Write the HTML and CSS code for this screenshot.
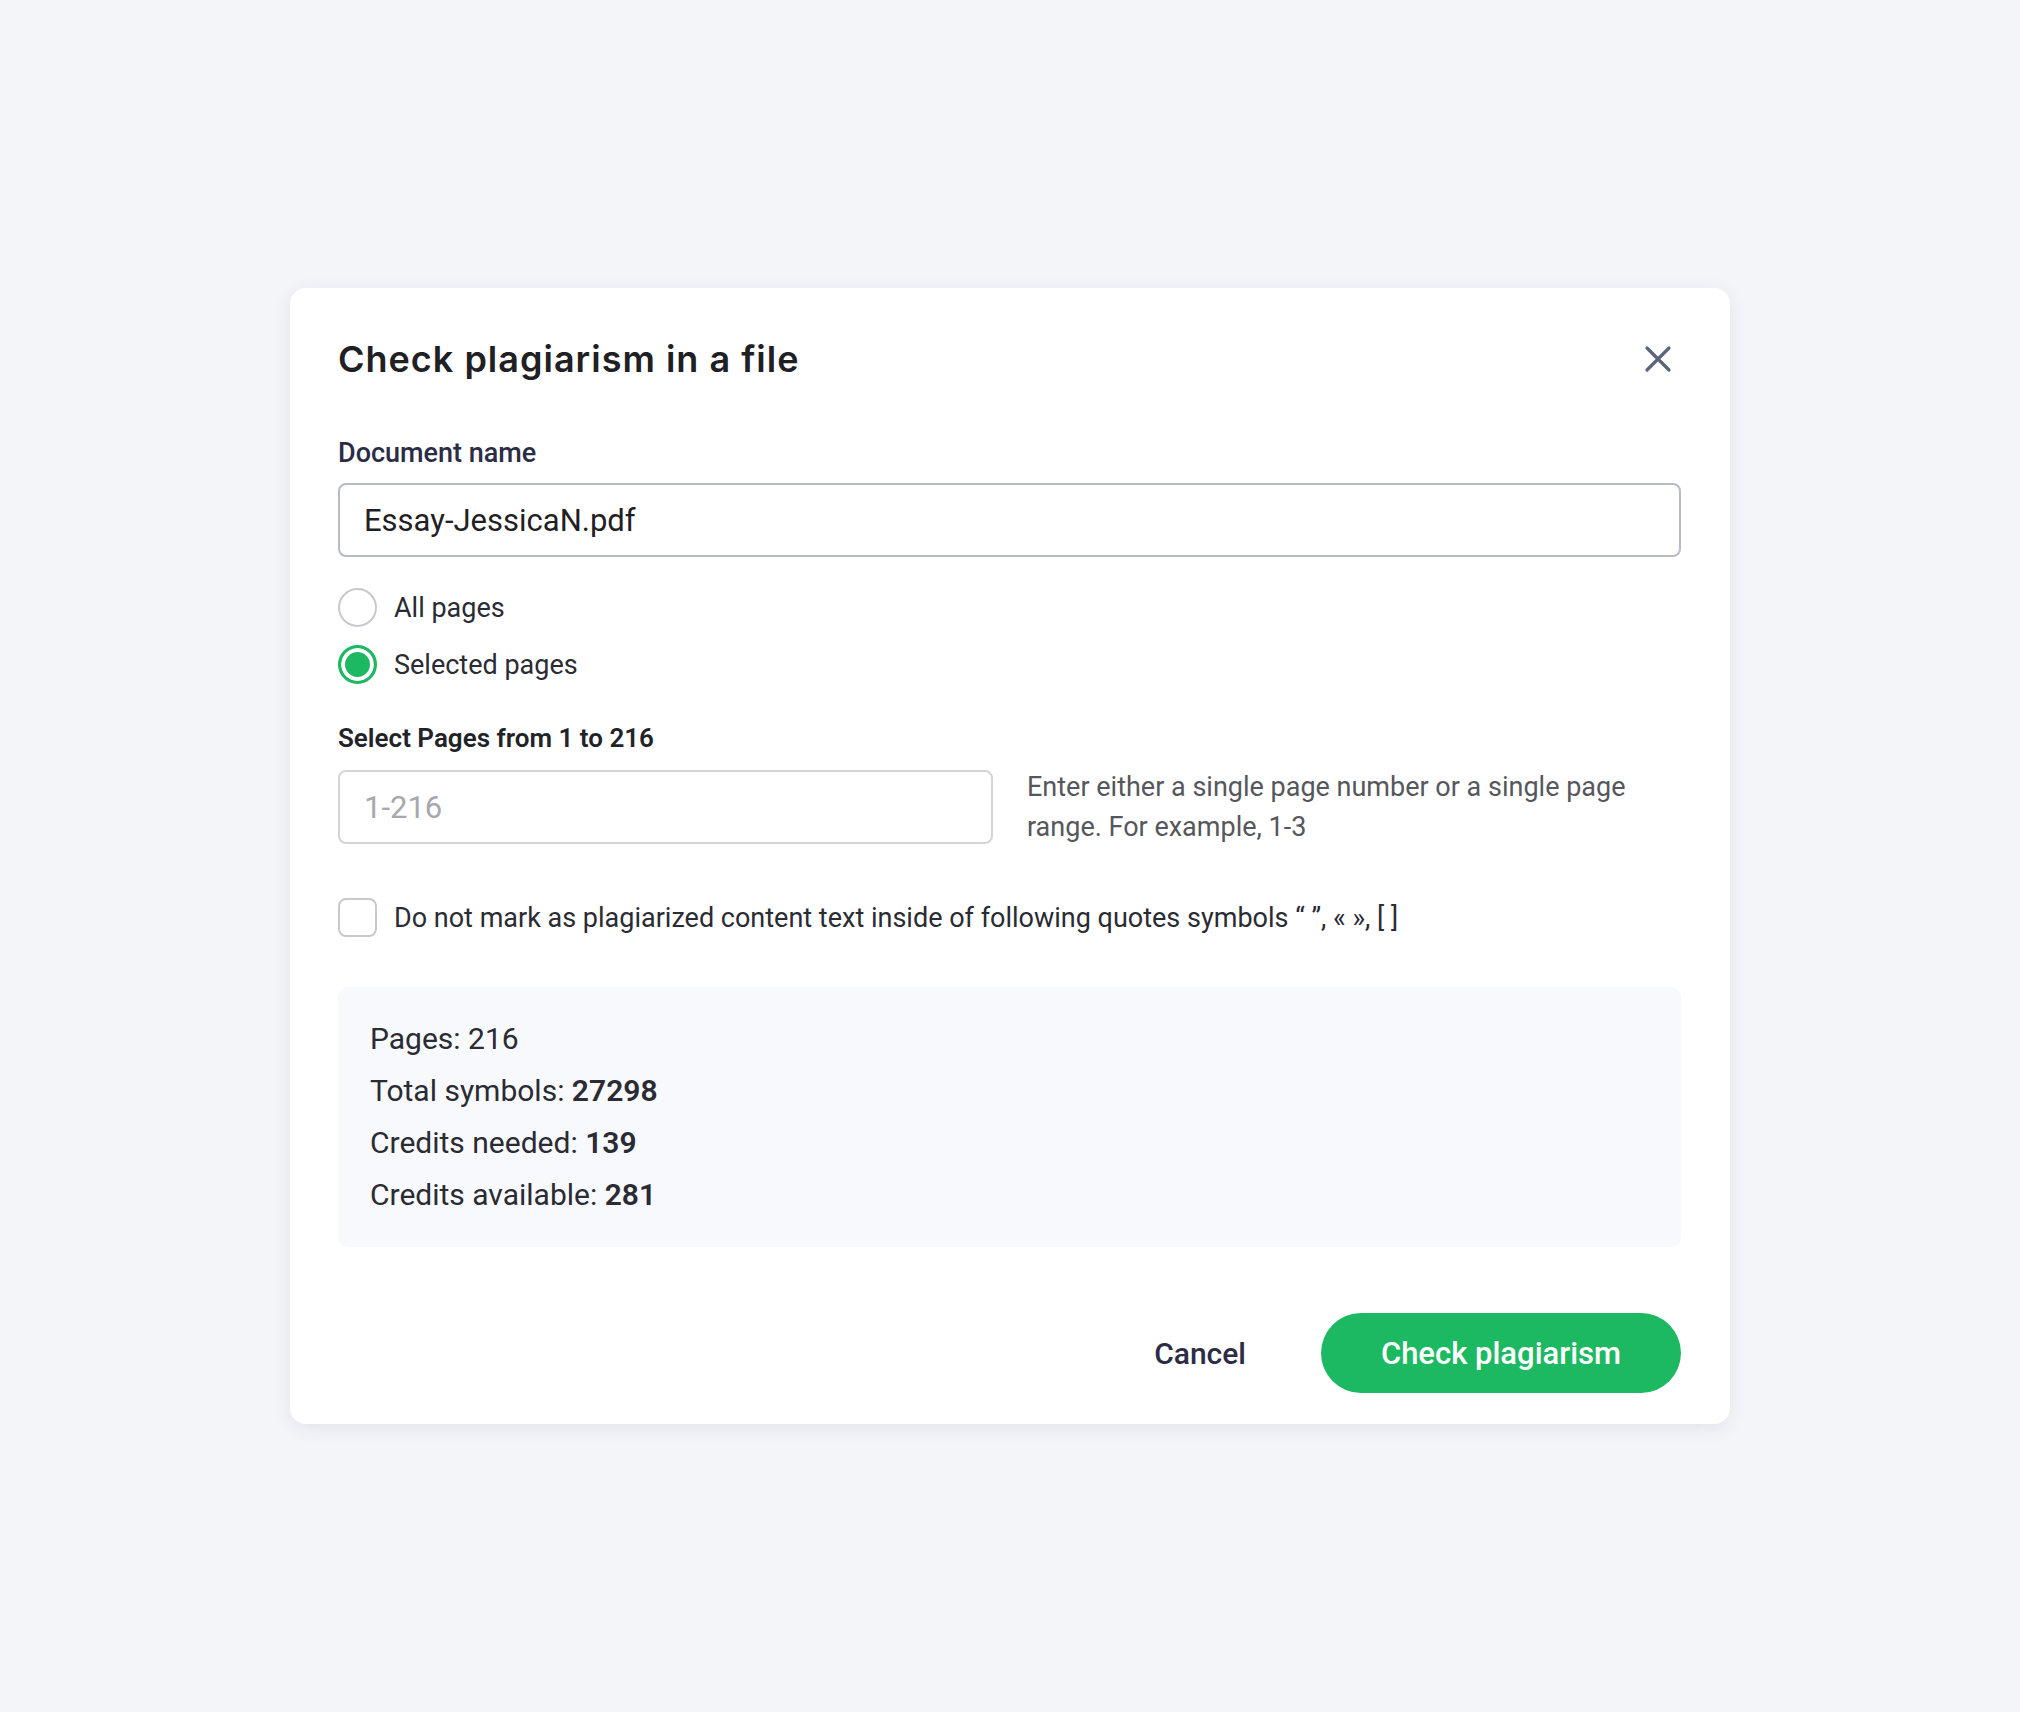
FILE: index.html
```html
<!DOCTYPE html>
<html lang="en">
<head>
  <meta charset="UTF-8" />
  <title>Check plagiarism in a file</title>
  <meta name="viewport" content="width=device-width, initial-scale=1" />
  <link rel="stylesheet" href="styles.css">
</head>
<body>
  <div class="modal">
    <div class="modalHead">
      <h1>Check plagiarism in a file</h1>
      <button class="closeBtn" type="button" aria-label="Close">
        <svg width="28" height="28" viewBox="0 0 28 28"><path d="M3 3L25 25M25 3L3 25" stroke="#5b6579" stroke-width="3.2" stroke-linecap="round"/></svg>
      </button>
    </div>

    <label class="fieldLabel" for="docName">Document name</label>
    <input id="docName" class="textInput" type="text" value="Essay-JessicaN.pdf" autocomplete="off" />

    <div class="radios">
      <label class="radio"><span class="dot"></span>All pages</label>
      <label class="radio checked"><span class="dot"></span>Selected pages</label>
    </div>

    <label class="fieldLabel pagesLabel" for="pageRange">Select Pages from 1 to 216</label>
    <div class="rangeRow">
      <input id="pageRange" class="textInput rangeInput" type="text" placeholder="1-216" autocomplete="off" />
      <p class="hint">Enter either a single page number or a single page range. For example, 1-3</p>
    </div>

    <label class="check"><span class="box"></span>Do not mark as plagiarized content text inside of following quotes symbols “ ”, « », [ ]</label>

    <div class="summary">
      <div>Pages: 216</div>
      <div>Total symbols: <b>27298</b></div>
      <div>Credits needed: <b>139</b></div>
      <div>Credits available: <b>281</b></div>
    </div>

    <div class="actions">
      <button class="cancelBtn" type="button">Cancel</button>
      <button class="submitBtn" type="button">Check plagiarism</button>
    </div>
  </div>
</body>
</html>
```

FILE: styles.css
```css
/* Modal for checking a file */
body, html {
  margin: 0; padding: 0;
  background: #f4f5f9;
  color: #2a2b33;
  font-family: Roboto, 'Liberation Sans', sans-serif;
}
body {
  display: flex;
  justify-content: center;
  align-items: center;
  height: 100vh;
}
.modal {
  width: 1440px;
  box-sizing: border-box;
  background: #fff;
  border-radius: 16px;
  padding: 48px 49px 31px 48px;
  box-shadow: 0 4px 18px rgb(40 50 80 / 0.09);
  display: flex;
  flex-direction: column;
}
.modalHead {
  display: flex;
  justify-content: space-between;
  align-items: center;
  height: 46px;
  margin-bottom: 55px;
}
h1 {
  margin: 0;
  font-family: Inter, 'Open Sans', sans-serif;
  font-size: 36px;
  font-weight: 600;
  color: #1f2024;
  letter-spacing: 1px;
}
.closeBtn {
  background: none;
  border: none;
  padding: 0;
  margin-right: 9px;
  cursor: pointer;
  display: flex;
}
.fieldLabel {
  font-size: 27px;
  font-weight: 500;
  line-height: 32px;
  color: #2b2c45;
  margin-bottom: 14px;
}
.textInput {
  height: 74px;
  box-sizing: border-box;
  border: 2px solid #b9bac8;
  border-radius: 8px;
  padding: 0 24px;
  font-family: Roboto, 'Liberation Sans', sans-serif;
  font-size: 31px;
  color: #1f2024;
  outline: none;
}
.radios {
  display: flex;
  flex-direction: column;
  gap: 18px;
  margin-top: 31px;
}
.radio, .check {
  display: flex;
  align-items: center;
  gap: 17px;
  font-size: 27px;
  color: #2a2b33;
  cursor: pointer;
}
.dot {
  width: 39px;
  height: 39px;
  box-sizing: border-box;
  border: 2px solid #c7c9cf;
  border-radius: 50%;
}
.checked .dot {
  border: 3px solid #1db862;
  box-shadow: inset 0 0 0 4px #fff;
  background: #1db862;
}
.pagesLabel {
  font-size: 26px;
  font-weight: 600;
  color: #222329;
  margin-top: 38px;
  margin-bottom: 13px;
}
.rangeRow {
  display: flex;
  align-items: center;
  gap: 34px;
}
.rangeInput {
  width: 655px;
  flex-shrink: 0;
  border-color: #d2d4d9;
}
.rangeInput::placeholder {
  color: #a6a8ae;
}
.hint {
  margin: 0;
  max-width: 620px;
  font-size: 27px;
  line-height: 40px;
  color: #56575c;
}
.check {
  margin-top: 51px;
}
.box {
  width: 39px;
  height: 39px;
  flex-shrink: 0;
  box-sizing: border-box;
  border: 2px solid #c7c9cf;
  border-radius: 8px;
}
.summary {
  margin-top: 50px;
  background: #f8f9fc;
  border-radius: 10px;
  padding: 26px 32px;
  font-size: 30px;
  line-height: 52px;
  color: #2a2b33;
}
.summary b {
  font-weight: 600;
}
.actions {
  display: flex;
  justify-content: flex-end;
  align-items: center;
  gap: 75px;
  margin-top: 66px;
}
.cancelBtn {
  background: none;
  border: none;
  padding: 0;
  font-family: Roboto, 'Liberation Sans', sans-serif;
  font-size: 30px;
  font-weight: 500;
  color: #2b2c45;
  cursor: pointer;
}
.submitBtn {
  width: 360px;
  height: 80px;
  border: none;
  border-radius: 40px;
  background: #1cb962;
  color: #fff;
  font-family: Roboto, 'Liberation Sans', sans-serif;
  font-size: 31px;
  font-weight: 500;
  cursor: pointer;
}
```
